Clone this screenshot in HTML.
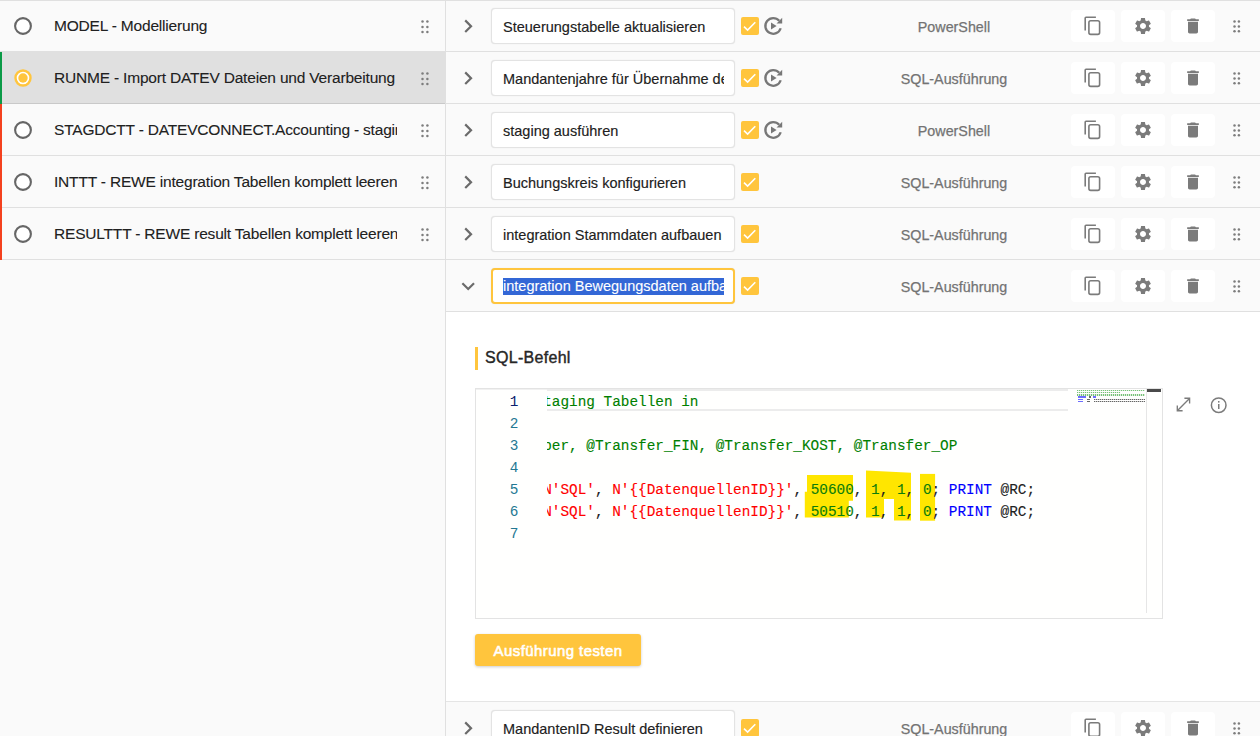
<!DOCTYPE html>
<html><head><meta charset="utf-8">
<style>
*{box-sizing:border-box}
html,body{margin:0;padding:0}
body{width:1260px;height:736px;overflow:hidden;position:relative;background:#fafafa;font-family:"Liberation Sans",sans-serif;color:#212121}
.abs{position:absolute}
/* left panel */
#left{position:absolute;left:0;top:0;width:446px;height:736px;background:#fafafa;border-right:1px solid #e0e0e0}
.lrow{position:absolute;left:0;width:445px;height:52px;border-bottom:1px solid rgba(0,0,0,.1)}
.lrow.sel{background:#e0e0e0}
.bar{position:absolute;left:0;top:0;width:2px;height:52px}
.radio{position:absolute;left:14.3px;top:16.8px;width:18px;height:18px}
.ltxt{position:absolute;left:54px;top:0;width:343px;height:51px;line-height:51px;font-size:15.5px;letter-spacing:-0.19px;-webkit-text-stroke:0.1px #212121;white-space:nowrap;overflow:hidden;color:#212121}
.dh{position:absolute;width:9px;height:15px}
/* right rows */
.rrow{position:absolute;left:446px;width:814px;height:52px;border-bottom:1px solid rgba(0,0,0,.1);background:#fafafa}
.chev{position:absolute;left:8.8px;top:12.8px;width:26.4px;height:26.4px}
.inp{position:absolute;left:45px;top:8px;width:244px;height:36px;background:#fff;border:1px solid #e3e3e3;border-radius:4px;overflow:hidden;box-shadow:0 0 1px rgba(0,0,0,.14)}
.inp span{position:absolute;left:11px;top:0.5px;width:221px;height:34px;line-height:35px;font-size:14.5px;white-space:nowrap;overflow:hidden;color:#212121;-webkit-text-stroke:0.15px #212121}
.inp.focus{border:2px solid #ffc53d}
.inp.focus span{left:10px;top:-1px}
.cb{position:absolute;left:295px;top:17px;width:18px;height:18px;background:#ffc53d;border-radius:2px}
.rep{position:absolute;left:314px;top:13px;width:26px;height:26px}
.type{position:absolute;left:408px;width:200px;top:0.8px;height:52px;line-height:52px;text-align:center;font-size:14.3px;color:#737373;-webkit-text-stroke:0.25px #737373}
.btn{position:absolute;top:10px;width:44px;height:32px;background:#fff;border-radius:4px}
.btn svg{position:absolute;left:12px;top:6px}
.btn.tr svg{left:12.4px}
.mono{font-family:"Liberation Mono",monospace;font-size:14.38px;line-height:22px;-webkit-text-stroke-width:0.12px}
.cm{color:#008000}.st{color:#ff0000}.nu{color:#0b7d0b}.kw{color:#0000ff}
.code>div{white-space:pre;height:22px}
.selx{font-weight:normal;background:#3367d6;color:#fff;padding:0.3px 0 1.2px;-webkit-text-stroke:0.1px #fff}
</style></head>
<body>
<div id="left">
  
  <div class="lrow" style="top:0"><svg class="radio" width="18" height="18" viewBox="0 0 18 18"><circle cx="9" cy="9" r="7.9" fill="#fff" stroke="#666" stroke-width="2.1"/></svg><div class="ltxt">MODEL - Modellierung</div>
    <div class="dh" style="left:420.8px;top:19.6px"><svg width="9" height="15" viewBox="0 0 9 15" style="position:absolute;left:0;top:0"><g fill="#7d7d7d"><circle cx="1.5" cy="1.5" r="1.25"/><circle cx="6.4" cy="1.5" r="1.25"/><circle cx="1.5" cy="6.9" r="1.25"/><circle cx="6.4" cy="6.9" r="1.25"/><circle cx="1.5" cy="12.0" r="1.25"/><circle cx="6.4" cy="12.0" r="1.25"/></g></svg></div></div>
  <div class="lrow sel" style="top:52px"><div class="bar" style="background:#0b9a47"></div><svg class="radio" width="18" height="18" viewBox="0 0 18 18"><circle cx="9" cy="9" r="7.5" fill="#fff" stroke="#ffc53d" stroke-width="2.4"/><circle cx="9" cy="9" r="4.7" fill="#ffc53d"/></svg><div class="ltxt">RUNME - Import DATEV Dateien und Verarbeitung</div>
    <div class="dh" style="left:420.8px;top:19.6px"><svg width="9" height="15" viewBox="0 0 9 15" style="position:absolute;left:0;top:0"><g fill="#7d7d7d"><circle cx="1.5" cy="1.5" r="1.25"/><circle cx="6.4" cy="1.5" r="1.25"/><circle cx="1.5" cy="6.9" r="1.25"/><circle cx="6.4" cy="6.9" r="1.25"/><circle cx="1.5" cy="12.0" r="1.25"/><circle cx="6.4" cy="12.0" r="1.25"/></g></svg></div></div>
  <div class="lrow" style="top:104px"><div class="bar" style="background:#f4411e"></div><svg class="radio" width="18" height="18" viewBox="0 0 18 18"><circle cx="9" cy="9" r="7.9" fill="#fff" stroke="#666" stroke-width="2.1"/></svg><div class="ltxt">STAGDCTT - DATEVCONNECT.Accounting - staging</div>
    <div class="dh" style="left:420.8px;top:19.6px"><svg width="9" height="15" viewBox="0 0 9 15" style="position:absolute;left:0;top:0"><g fill="#7d7d7d"><circle cx="1.5" cy="1.5" r="1.25"/><circle cx="6.4" cy="1.5" r="1.25"/><circle cx="1.5" cy="6.9" r="1.25"/><circle cx="6.4" cy="6.9" r="1.25"/><circle cx="1.5" cy="12.0" r="1.25"/><circle cx="6.4" cy="12.0" r="1.25"/></g></svg></div></div>
  <div class="lrow" style="top:156px"><div class="bar" style="background:#f4411e"></div><svg class="radio" width="18" height="18" viewBox="0 0 18 18"><circle cx="9" cy="9" r="7.9" fill="#fff" stroke="#666" stroke-width="2.1"/></svg><div class="ltxt">INTTT - REWE integration Tabellen komplett leeren</div>
    <div class="dh" style="left:420.8px;top:19.6px"><svg width="9" height="15" viewBox="0 0 9 15" style="position:absolute;left:0;top:0"><g fill="#7d7d7d"><circle cx="1.5" cy="1.5" r="1.25"/><circle cx="6.4" cy="1.5" r="1.25"/><circle cx="1.5" cy="6.9" r="1.25"/><circle cx="6.4" cy="6.9" r="1.25"/><circle cx="1.5" cy="12.0" r="1.25"/><circle cx="6.4" cy="12.0" r="1.25"/></g></svg></div></div>
  <div class="lrow" style="top:208px"><div class="bar" style="background:#f4411e"></div><svg class="radio" width="18" height="18" viewBox="0 0 18 18"><circle cx="9" cy="9" r="7.9" fill="#fff" stroke="#666" stroke-width="2.1"/></svg><div class="ltxt">RESULTTT - REWE result Tabellen komplett leeren</div>
    <div class="dh" style="left:420.8px;top:19.6px"><svg width="9" height="15" viewBox="0 0 9 15" style="position:absolute;left:0;top:0"><g fill="#7d7d7d"><circle cx="1.5" cy="1.5" r="1.25"/><circle cx="6.4" cy="1.5" r="1.25"/><circle cx="1.5" cy="6.9" r="1.25"/><circle cx="6.4" cy="6.9" r="1.25"/><circle cx="1.5" cy="12.0" r="1.25"/><circle cx="6.4" cy="12.0" r="1.25"/></g></svg></div></div>
</div>

<!-- RIGHT ROWS -->
<div class="rrow" style="top:0px"><svg class="chev" viewBox="0 0 24 24"><path fill="#6b6b6b" d="M10 6L8.59 7.41 13.17 12l-4.58 4.59L10 18l6-6z"/></svg><div class="inp"><span>Steuerungstabelle aktualisieren</span></div><div class="cb"><svg width="18" height="18" viewBox="0 0 18 18" style="position:absolute;left:0;top:0"><polyline points="3,9.6 6.6,13.1 14.3,5.2" fill="none" stroke="#fff" stroke-width="1.6"/></svg></div><svg class="rep" viewBox="0 0 26 26"><path d="M20.69 15.26A7.85 7.85 0 1 1 19.21 7.85" fill="none" stroke="#777" stroke-width="2.3"/><polygon points="16.6,10.6 22.2,10.6 22.2,4.8" fill="#777"/><polygon points="11,9.5 11,16.6 16.6,13" fill="#777"/></svg><div class="type">PowerShell</div><div class="btn" style="left:625px"><svg width="44" height="32" viewBox="0 0 44 32" style="position:absolute;left:0;top:0"><path d="M14.2 20.4V8.1Q14.2 7.3 15 7.3H24.9" fill="none" stroke="#7b7b7b" stroke-width="1.6"/><rect x="17.9" y="10.8" width="10.7" height="13.6" rx="1.8" fill="none" stroke="#7b7b7b" stroke-width="1.6"/></svg></div><div class="btn" style="left:675px"><svg width="20" height="20" viewBox="0 0 24 24"><path fill="#7b7b7b" d="M19.14,12.94c0.04-0.3,0.06-0.61,0.06-0.94c0-0.32-0.02-0.64-0.07-0.94l2.03-1.58c0.18-0.14,0.23-0.41,0.12-0.61 l-1.92-3.32c-0.12-0.22-0.37-0.29-0.59-0.22l-2.39,0.96c-0.5-0.38-1.03-0.7-1.62-0.94L14.4,2.81c-0.04-0.24-0.24-0.41-0.48-0.41 h-3.84c-0.24,0-0.43,0.17-0.47,0.41L9.25,5.35C8.66,5.59,8.12,5.92,7.63,6.29L5.240,5.33c-0.22-0.08-0.47,0-0.59,0.22L2.74,8.87 C2.62,9.08,2.66,9.34,2.86,9.48l2.03,1.58C4.84,11.36,4.8,11.69,4.8,12s0.02,0.64,0.07,0.94l-2.03,1.58 c-0.18,0.14-0.23,0.41-0.12,0.61l1.92,3.32c0.12,0.22,0.37,0.29,0.59,0.22l2.39-0.96c0.5,0.38,1.03,0.7,1.62,0.94l0.36,2.54 c0.05,0.24,0.24,0.41,0.48,0.41h3.840c0.24,0,0.44-0.17,0.47-0.41l0.36-2.54c0.59-0.24,1.13-0.56,1.62-0.94l2.39,0.96 c0.22,0.08,0.47,0,0.59-0.22l1.92-3.32c0.12-0.22,0.07-0.47-0.12-0.61L19.14,12.94z M12,15.6c-1.98,0-3.6-1.62-3.6-3.6 s1.62-3.6,3.6-3.6s3.6,1.62,3.6,3.6S13.98,15.6,12,15.6z"/></svg></div><div class="btn tr" style="left:725px"><svg width="20" height="20" viewBox="0 0 24 24"><path fill="#7b7b7b" d="M6 19c0 1.1.9 2 2 2h8c1.1 0 2-.9 2-2V7H6v12zM19 4h-3.5l-1-1h-5l-1 1H5v2h14V4z"/></svg></div><div class="dh" style="left:787.2px;top:19.8px"><svg width="9" height="15" viewBox="0 0 9 15" style="position:absolute;left:0;top:0"><g fill="#7d7d7d"><circle cx="1.5" cy="1.5" r="1.25"/><circle cx="5.9" cy="1.5" r="1.25"/><circle cx="1.5" cy="6.5" r="1.25"/><circle cx="5.9" cy="6.5" r="1.25"/><circle cx="1.5" cy="11.3" r="1.25"/><circle cx="5.9" cy="11.3" r="1.25"/></g></svg></div></div>
<div class="rrow" style="top:52px"><svg class="chev" viewBox="0 0 24 24"><path fill="#6b6b6b" d="M10 6L8.59 7.41 13.17 12l-4.58 4.59L10 18l6-6z"/></svg><div class="inp"><span>Mandantenjahre für Übernahme der Daten</span></div><div class="cb"><svg width="18" height="18" viewBox="0 0 18 18" style="position:absolute;left:0;top:0"><polyline points="3,9.6 6.6,13.1 14.3,5.2" fill="none" stroke="#fff" stroke-width="1.6"/></svg></div><svg class="rep" viewBox="0 0 26 26"><path d="M20.69 15.26A7.85 7.85 0 1 1 19.21 7.85" fill="none" stroke="#777" stroke-width="2.3"/><polygon points="16.6,10.6 22.2,10.6 22.2,4.8" fill="#777"/><polygon points="11,9.5 11,16.6 16.6,13" fill="#777"/></svg><div class="type">SQL-Ausführung</div><div class="btn" style="left:625px"><svg width="44" height="32" viewBox="0 0 44 32" style="position:absolute;left:0;top:0"><path d="M14.2 20.4V8.1Q14.2 7.3 15 7.3H24.9" fill="none" stroke="#7b7b7b" stroke-width="1.6"/><rect x="17.9" y="10.8" width="10.7" height="13.6" rx="1.8" fill="none" stroke="#7b7b7b" stroke-width="1.6"/></svg></div><div class="btn" style="left:675px"><svg width="20" height="20" viewBox="0 0 24 24"><path fill="#7b7b7b" d="M19.14,12.94c0.04-0.3,0.06-0.61,0.06-0.94c0-0.32-0.02-0.64-0.07-0.94l2.03-1.58c0.18-0.14,0.23-0.41,0.12-0.61 l-1.92-3.32c-0.12-0.22-0.37-0.29-0.59-0.22l-2.39,0.96c-0.5-0.38-1.03-0.7-1.62-0.94L14.4,2.81c-0.04-0.24-0.24-0.41-0.48-0.41 h-3.84c-0.24,0-0.43,0.17-0.47,0.41L9.25,5.35C8.66,5.59,8.12,5.92,7.63,6.29L5.240,5.33c-0.22-0.08-0.47,0-0.59,0.22L2.74,8.87 C2.62,9.08,2.66,9.34,2.86,9.48l2.03,1.58C4.84,11.36,4.8,11.69,4.8,12s0.02,0.64,0.07,0.94l-2.03,1.58 c-0.18,0.14-0.23,0.41-0.12,0.61l1.92,3.32c0.12,0.22,0.37,0.29,0.59,0.22l2.39-0.96c0.5,0.38,1.03,0.7,1.62,0.94l0.36,2.54 c0.05,0.24,0.24,0.41,0.48,0.41h3.840c0.24,0,0.44-0.17,0.47-0.41l0.36-2.54c0.59-0.24,1.13-0.56,1.62-0.94l2.39,0.96 c0.22,0.08,0.47,0,0.59-0.22l1.92-3.32c0.12-0.22,0.07-0.47-0.12-0.61L19.14,12.94z M12,15.6c-1.98,0-3.6-1.62-3.6-3.6 s1.62-3.6,3.6-3.6s3.6,1.62,3.6,3.6S13.98,15.6,12,15.6z"/></svg></div><div class="btn tr" style="left:725px"><svg width="20" height="20" viewBox="0 0 24 24"><path fill="#7b7b7b" d="M6 19c0 1.1.9 2 2 2h8c1.1 0 2-.9 2-2V7H6v12zM19 4h-3.5l-1-1h-5l-1 1H5v2h14V4z"/></svg></div><div class="dh" style="left:787.2px;top:19.8px"><svg width="9" height="15" viewBox="0 0 9 15" style="position:absolute;left:0;top:0"><g fill="#7d7d7d"><circle cx="1.5" cy="1.5" r="1.25"/><circle cx="5.9" cy="1.5" r="1.25"/><circle cx="1.5" cy="6.5" r="1.25"/><circle cx="5.9" cy="6.5" r="1.25"/><circle cx="1.5" cy="11.3" r="1.25"/><circle cx="5.9" cy="11.3" r="1.25"/></g></svg></div></div>
<div class="rrow" style="top:104px"><svg class="chev" viewBox="0 0 24 24"><path fill="#6b6b6b" d="M10 6L8.59 7.41 13.17 12l-4.58 4.59L10 18l6-6z"/></svg><div class="inp"><span>staging ausführen</span></div><div class="cb"><svg width="18" height="18" viewBox="0 0 18 18" style="position:absolute;left:0;top:0"><polyline points="3,9.6 6.6,13.1 14.3,5.2" fill="none" stroke="#fff" stroke-width="1.6"/></svg></div><svg class="rep" viewBox="0 0 26 26"><path d="M20.69 15.26A7.85 7.85 0 1 1 19.21 7.85" fill="none" stroke="#777" stroke-width="2.3"/><polygon points="16.6,10.6 22.2,10.6 22.2,4.8" fill="#777"/><polygon points="11,9.5 11,16.6 16.6,13" fill="#777"/></svg><div class="type">PowerShell</div><div class="btn" style="left:625px"><svg width="44" height="32" viewBox="0 0 44 32" style="position:absolute;left:0;top:0"><path d="M14.2 20.4V8.1Q14.2 7.3 15 7.3H24.9" fill="none" stroke="#7b7b7b" stroke-width="1.6"/><rect x="17.9" y="10.8" width="10.7" height="13.6" rx="1.8" fill="none" stroke="#7b7b7b" stroke-width="1.6"/></svg></div><div class="btn" style="left:675px"><svg width="20" height="20" viewBox="0 0 24 24"><path fill="#7b7b7b" d="M19.14,12.94c0.04-0.3,0.06-0.61,0.06-0.94c0-0.32-0.02-0.64-0.07-0.94l2.03-1.58c0.18-0.14,0.23-0.41,0.12-0.61 l-1.92-3.32c-0.12-0.22-0.37-0.29-0.59-0.22l-2.39,0.96c-0.5-0.38-1.03-0.7-1.62-0.94L14.4,2.81c-0.04-0.24-0.24-0.41-0.48-0.41 h-3.84c-0.24,0-0.43,0.17-0.47,0.41L9.25,5.35C8.66,5.59,8.12,5.92,7.63,6.29L5.240,5.33c-0.22-0.08-0.47,0-0.59,0.22L2.74,8.87 C2.62,9.08,2.66,9.34,2.86,9.48l2.03,1.58C4.84,11.36,4.8,11.69,4.8,12s0.02,0.64,0.07,0.94l-2.03,1.58 c-0.18,0.14-0.23,0.41-0.12,0.61l1.92,3.32c0.12,0.22,0.37,0.29,0.59,0.22l2.39-0.96c0.5,0.38,1.03,0.7,1.62,0.94l0.36,2.54 c0.05,0.24,0.24,0.41,0.48,0.41h3.840c0.24,0,0.44-0.17,0.47-0.41l0.36-2.54c0.59-0.24,1.13-0.56,1.62-0.94l2.39,0.96 c0.22,0.08,0.47,0,0.59-0.22l1.92-3.32c0.12-0.22,0.07-0.47-0.12-0.61L19.14,12.94z M12,15.6c-1.98,0-3.6-1.62-3.6-3.6 s1.62-3.6,3.6-3.6s3.6,1.62,3.6,3.6S13.98,15.6,12,15.6z"/></svg></div><div class="btn tr" style="left:725px"><svg width="20" height="20" viewBox="0 0 24 24"><path fill="#7b7b7b" d="M6 19c0 1.1.9 2 2 2h8c1.1 0 2-.9 2-2V7H6v12zM19 4h-3.5l-1-1h-5l-1 1H5v2h14V4z"/></svg></div><div class="dh" style="left:787.2px;top:19.8px"><svg width="9" height="15" viewBox="0 0 9 15" style="position:absolute;left:0;top:0"><g fill="#7d7d7d"><circle cx="1.5" cy="1.5" r="1.25"/><circle cx="5.9" cy="1.5" r="1.25"/><circle cx="1.5" cy="6.5" r="1.25"/><circle cx="5.9" cy="6.5" r="1.25"/><circle cx="1.5" cy="11.3" r="1.25"/><circle cx="5.9" cy="11.3" r="1.25"/></g></svg></div></div>
<div class="rrow" style="top:156px"><svg class="chev" viewBox="0 0 24 24"><path fill="#6b6b6b" d="M10 6L8.59 7.41 13.17 12l-4.58 4.59L10 18l6-6z"/></svg><div class="inp"><span>Buchungskreis konfigurieren</span></div><div class="cb"><svg width="18" height="18" viewBox="0 0 18 18" style="position:absolute;left:0;top:0"><polyline points="3,9.6 6.6,13.1 14.3,5.2" fill="none" stroke="#fff" stroke-width="1.6"/></svg></div><div class="type">SQL-Ausführung</div><div class="btn" style="left:625px"><svg width="44" height="32" viewBox="0 0 44 32" style="position:absolute;left:0;top:0"><path d="M14.2 20.4V8.1Q14.2 7.3 15 7.3H24.9" fill="none" stroke="#7b7b7b" stroke-width="1.6"/><rect x="17.9" y="10.8" width="10.7" height="13.6" rx="1.8" fill="none" stroke="#7b7b7b" stroke-width="1.6"/></svg></div><div class="btn" style="left:675px"><svg width="20" height="20" viewBox="0 0 24 24"><path fill="#7b7b7b" d="M19.14,12.94c0.04-0.3,0.06-0.61,0.06-0.94c0-0.32-0.02-0.64-0.07-0.94l2.03-1.58c0.18-0.14,0.23-0.41,0.12-0.61 l-1.92-3.32c-0.12-0.22-0.37-0.29-0.59-0.22l-2.39,0.96c-0.5-0.38-1.03-0.7-1.62-0.94L14.4,2.81c-0.04-0.24-0.24-0.41-0.48-0.41 h-3.84c-0.24,0-0.43,0.17-0.47,0.41L9.25,5.35C8.66,5.59,8.12,5.92,7.63,6.29L5.240,5.33c-0.22-0.08-0.47,0-0.59,0.22L2.74,8.87 C2.62,9.08,2.66,9.34,2.86,9.48l2.03,1.58C4.84,11.36,4.8,11.69,4.8,12s0.02,0.64,0.07,0.94l-2.03,1.58 c-0.18,0.14-0.23,0.41-0.12,0.61l1.92,3.32c0.12,0.22,0.37,0.29,0.59,0.22l2.39-0.96c0.5,0.38,1.03,0.7,1.62,0.94l0.36,2.54 c0.05,0.24,0.24,0.41,0.48,0.41h3.840c0.24,0,0.44-0.17,0.47-0.41l0.36-2.54c0.59-0.24,1.13-0.56,1.62-0.94l2.39,0.96 c0.22,0.08,0.47,0,0.59-0.22l1.92-3.32c0.12-0.22,0.07-0.47-0.12-0.61L19.14,12.94z M12,15.6c-1.98,0-3.6-1.62-3.6-3.6 s1.62-3.6,3.6-3.6s3.6,1.62,3.6,3.6S13.98,15.6,12,15.6z"/></svg></div><div class="btn tr" style="left:725px"><svg width="20" height="20" viewBox="0 0 24 24"><path fill="#7b7b7b" d="M6 19c0 1.1.9 2 2 2h8c1.1 0 2-.9 2-2V7H6v12zM19 4h-3.5l-1-1h-5l-1 1H5v2h14V4z"/></svg></div><div class="dh" style="left:787.2px;top:19.8px"><svg width="9" height="15" viewBox="0 0 9 15" style="position:absolute;left:0;top:0"><g fill="#7d7d7d"><circle cx="1.5" cy="1.5" r="1.25"/><circle cx="5.9" cy="1.5" r="1.25"/><circle cx="1.5" cy="6.5" r="1.25"/><circle cx="5.9" cy="6.5" r="1.25"/><circle cx="1.5" cy="11.3" r="1.25"/><circle cx="5.9" cy="11.3" r="1.25"/></g></svg></div></div>
<div class="rrow" style="top:208px"><svg class="chev" viewBox="0 0 24 24"><path fill="#6b6b6b" d="M10 6L8.59 7.41 13.17 12l-4.58 4.59L10 18l6-6z"/></svg><div class="inp"><span>integration Stammdaten aufbauen</span></div><div class="cb"><svg width="18" height="18" viewBox="0 0 18 18" style="position:absolute;left:0;top:0"><polyline points="3,9.6 6.6,13.1 14.3,5.2" fill="none" stroke="#fff" stroke-width="1.6"/></svg></div><div class="type">SQL-Ausführung</div><div class="btn" style="left:625px"><svg width="44" height="32" viewBox="0 0 44 32" style="position:absolute;left:0;top:0"><path d="M14.2 20.4V8.1Q14.2 7.3 15 7.3H24.9" fill="none" stroke="#7b7b7b" stroke-width="1.6"/><rect x="17.9" y="10.8" width="10.7" height="13.6" rx="1.8" fill="none" stroke="#7b7b7b" stroke-width="1.6"/></svg></div><div class="btn" style="left:675px"><svg width="20" height="20" viewBox="0 0 24 24"><path fill="#7b7b7b" d="M19.14,12.94c0.04-0.3,0.06-0.61,0.06-0.94c0-0.32-0.02-0.64-0.07-0.94l2.03-1.58c0.18-0.14,0.23-0.41,0.12-0.61 l-1.92-3.32c-0.12-0.22-0.37-0.29-0.59-0.22l-2.39,0.96c-0.5-0.38-1.03-0.7-1.62-0.94L14.4,2.81c-0.04-0.24-0.24-0.41-0.48-0.41 h-3.84c-0.24,0-0.43,0.17-0.47,0.41L9.25,5.35C8.66,5.59,8.12,5.92,7.63,6.29L5.240,5.33c-0.22-0.08-0.47,0-0.59,0.22L2.74,8.87 C2.62,9.08,2.66,9.34,2.86,9.48l2.03,1.58C4.84,11.36,4.8,11.69,4.8,12s0.02,0.64,0.07,0.94l-2.03,1.58 c-0.18,0.14-0.23,0.41-0.12,0.61l1.92,3.32c0.12,0.22,0.37,0.29,0.59,0.22l2.39-0.96c0.5,0.38,1.03,0.7,1.62,0.94l0.36,2.54 c0.05,0.24,0.24,0.41,0.48,0.41h3.840c0.24,0,0.44-0.17,0.47-0.41l0.36-2.54c0.59-0.24,1.13-0.56,1.62-0.94l2.39,0.96 c0.22,0.08,0.47,0,0.59-0.22l1.92-3.32c0.12-0.22,0.07-0.47-0.12-0.61L19.14,12.94z M12,15.6c-1.98,0-3.6-1.62-3.6-3.6 s1.62-3.6,3.6-3.6s3.6,1.62,3.6,3.6S13.98,15.6,12,15.6z"/></svg></div><div class="btn tr" style="left:725px"><svg width="20" height="20" viewBox="0 0 24 24"><path fill="#7b7b7b" d="M6 19c0 1.1.9 2 2 2h8c1.1 0 2-.9 2-2V7H6v12zM19 4h-3.5l-1-1h-5l-1 1H5v2h14V4z"/></svg></div><div class="dh" style="left:787.2px;top:19.8px"><svg width="9" height="15" viewBox="0 0 9 15" style="position:absolute;left:0;top:0"><g fill="#7d7d7d"><circle cx="1.5" cy="1.5" r="1.25"/><circle cx="5.9" cy="1.5" r="1.25"/><circle cx="1.5" cy="6.5" r="1.25"/><circle cx="5.9" cy="6.5" r="1.25"/><circle cx="1.5" cy="11.3" r="1.25"/><circle cx="5.9" cy="11.3" r="1.25"/></g></svg></div></div>
<div class="rrow" style="top:260px"><svg class="chev" viewBox="0 0 24 24"><path fill="#6b6b6b" d="M16.59 8.59L12 13.17 7.41 8.59 6 10l6 6 6-6z"/></svg><div class="inp focus"><span><b class="selx">integration Bewegungsdaten aufbauen</b></span></div><div class="cb"><svg width="18" height="18" viewBox="0 0 18 18" style="position:absolute;left:0;top:0"><polyline points="3,9.6 6.6,13.1 14.3,5.2" fill="none" stroke="#fff" stroke-width="1.6"/></svg></div><div class="type">SQL-Ausführung</div><div class="btn" style="left:625px"><svg width="44" height="32" viewBox="0 0 44 32" style="position:absolute;left:0;top:0"><path d="M14.2 20.4V8.1Q14.2 7.3 15 7.3H24.9" fill="none" stroke="#7b7b7b" stroke-width="1.6"/><rect x="17.9" y="10.8" width="10.7" height="13.6" rx="1.8" fill="none" stroke="#7b7b7b" stroke-width="1.6"/></svg></div><div class="btn" style="left:675px"><svg width="20" height="20" viewBox="0 0 24 24"><path fill="#7b7b7b" d="M19.14,12.94c0.04-0.3,0.06-0.61,0.06-0.94c0-0.32-0.02-0.64-0.07-0.94l2.03-1.58c0.18-0.14,0.23-0.41,0.12-0.61 l-1.92-3.32c-0.12-0.22-0.37-0.29-0.59-0.22l-2.39,0.96c-0.5-0.38-1.03-0.7-1.62-0.94L14.4,2.81c-0.04-0.24-0.24-0.41-0.48-0.41 h-3.84c-0.24,0-0.43,0.17-0.47,0.41L9.25,5.35C8.66,5.59,8.12,5.92,7.63,6.29L5.240,5.33c-0.22-0.08-0.47,0-0.59,0.22L2.74,8.87 C2.62,9.08,2.66,9.34,2.86,9.48l2.03,1.58C4.84,11.36,4.8,11.69,4.8,12s0.02,0.64,0.07,0.94l-2.03,1.58 c-0.18,0.14-0.23,0.41-0.12,0.61l1.92,3.32c0.12,0.22,0.37,0.29,0.59,0.22l2.39-0.96c0.5,0.38,1.03,0.7,1.62,0.94l0.36,2.54 c0.05,0.24,0.24,0.41,0.48,0.41h3.840c0.24,0,0.44-0.17,0.47-0.41l0.36-2.54c0.59-0.24,1.13-0.56,1.62-0.94l2.39,0.96 c0.22,0.08,0.47,0,0.59-0.22l1.92-3.32c0.12-0.22,0.07-0.47-0.12-0.61L19.14,12.94z M12,15.6c-1.98,0-3.6-1.62-3.6-3.6 s1.62-3.6,3.6-3.6s3.6,1.62,3.6,3.6S13.98,15.6,12,15.6z"/></svg></div><div class="btn tr" style="left:725px"><svg width="20" height="20" viewBox="0 0 24 24"><path fill="#7b7b7b" d="M6 19c0 1.1.9 2 2 2h8c1.1 0 2-.9 2-2V7H6v12zM19 4h-3.5l-1-1h-5l-1 1H5v2h14V4z"/></svg></div><div class="dh" style="left:787.2px;top:19.8px"><svg width="9" height="15" viewBox="0 0 9 15" style="position:absolute;left:0;top:0"><g fill="#7d7d7d"><circle cx="1.5" cy="1.5" r="1.25"/><circle cx="5.9" cy="1.5" r="1.25"/><circle cx="1.5" cy="6.5" r="1.25"/><circle cx="5.9" cy="6.5" r="1.25"/><circle cx="1.5" cy="11.3" r="1.25"/><circle cx="5.9" cy="11.3" r="1.25"/></g></svg></div></div>
<div class="rrow" style="top:702px"><svg class="chev" viewBox="0 0 24 24"><path fill="#6b6b6b" d="M10 6L8.59 7.41 13.17 12l-4.58 4.59L10 18l6-6z"/></svg><div class="inp"><span>MandantenID Result definieren</span></div><div class="cb"><svg width="18" height="18" viewBox="0 0 18 18" style="position:absolute;left:0;top:0"><polyline points="3,9.6 6.6,13.1 14.3,5.2" fill="none" stroke="#fff" stroke-width="1.6"/></svg></div><div class="type">SQL-Ausführung</div><div class="btn" style="left:625px"><svg width="44" height="32" viewBox="0 0 44 32" style="position:absolute;left:0;top:0"><path d="M14.2 20.4V8.1Q14.2 7.3 15 7.3H24.9" fill="none" stroke="#7b7b7b" stroke-width="1.6"/><rect x="17.9" y="10.8" width="10.7" height="13.6" rx="1.8" fill="none" stroke="#7b7b7b" stroke-width="1.6"/></svg></div><div class="btn" style="left:675px"><svg width="20" height="20" viewBox="0 0 24 24"><path fill="#7b7b7b" d="M19.14,12.94c0.04-0.3,0.06-0.61,0.06-0.94c0-0.32-0.02-0.64-0.07-0.94l2.03-1.58c0.18-0.14,0.23-0.41,0.12-0.61 l-1.92-3.32c-0.12-0.22-0.37-0.29-0.59-0.22l-2.39,0.96c-0.5-0.38-1.03-0.7-1.62-0.94L14.4,2.81c-0.04-0.24-0.24-0.41-0.48-0.41 h-3.84c-0.24,0-0.43,0.17-0.47,0.41L9.25,5.35C8.66,5.59,8.12,5.92,7.63,6.29L5.240,5.33c-0.22-0.08-0.47,0-0.59,0.22L2.74,8.87 C2.62,9.08,2.66,9.34,2.86,9.48l2.03,1.58C4.84,11.36,4.8,11.69,4.8,12s0.02,0.64,0.07,0.94l-2.03,1.58 c-0.18,0.14-0.23,0.41-0.12,0.61l1.92,3.32c0.12,0.22,0.37,0.29,0.59,0.22l2.39-0.96c0.5,0.38,1.03,0.7,1.62,0.94l0.36,2.54 c0.05,0.24,0.24,0.41,0.48,0.41h3.840c0.24,0,0.44-0.17,0.47-0.41l0.36-2.54c0.59-0.24,1.13-0.56,1.62-0.94l2.39,0.96 c0.22,0.08,0.47,0,0.59-0.22l1.92-3.32c0.12-0.22,0.07-0.47-0.12-0.61L19.14,12.94z M12,15.6c-1.98,0-3.6-1.62-3.6-3.6 s1.62-3.6,3.6-3.6s3.6,1.62,3.6,3.6S13.98,15.6,12,15.6z"/></svg></div><div class="btn tr" style="left:725px"><svg width="20" height="20" viewBox="0 0 24 24"><path fill="#7b7b7b" d="M6 19c0 1.1.9 2 2 2h8c1.1 0 2-.9 2-2V7H6v12zM19 4h-3.5l-1-1h-5l-1 1H5v2h14V4z"/></svg></div><div class="dh" style="left:787.2px;top:19.8px"><svg width="9" height="15" viewBox="0 0 9 15" style="position:absolute;left:0;top:0"><g fill="#7d7d7d"><circle cx="1.5" cy="1.5" r="1.25"/><circle cx="5.9" cy="1.5" r="1.25"/><circle cx="1.5" cy="6.5" r="1.25"/><circle cx="5.9" cy="6.5" r="1.25"/><circle cx="1.5" cy="11.3" r="1.25"/><circle cx="5.9" cy="11.3" r="1.25"/></g></svg></div></div>

<div class="abs" style="left:0;top:0;width:445px;height:1px;background:rgba(0,0,0,.1)"></div>
<div class="abs" style="left:446px;top:0;width:814px;height:1px;background:rgba(0,0,0,.1)"></div>
<!-- DETAIL -->
<div class="abs" style="left:446px;top:312px;width:814px;height:390px;background:#fff;border-bottom:1px solid rgba(0,0,0,.1)"></div>
<div class="abs" style="left:475px;top:347px;width:3px;height:23px;background:#ffc53d"></div>
<div class="abs" style="left:485px;top:349px;height:18px;line-height:18px;font-size:16px;font-weight:normal;-webkit-text-stroke:0.4px #262626;letter-spacing:0.3px;color:#262626;white-space:nowrap">SQL-Befehl</div>
<!-- editor -->
<div class="abs" style="left:475px;top:388px;width:688px;height:231px;border:1px solid #e3e3e3;background:#fffffe"></div>
<div class="abs" style="left:547px;top:389px;width:521px;height:22px;border-top:2px solid #ececec;border-bottom:2px solid #ececec"></div>
<div class="abs" style="left:476px;top:389px;width:71px;height:1px;background:#f1f1f1"></div>

<svg class="abs" style="left:0;top:0" width="1260" height="736" viewBox="0 0 1260 736">
  <path fill="#ffe600" d="M807 475H853V500.7H848.8V517.4H804.8V491.8H807Z"/>
  <path fill="#ffe600" d="M866 470.4L911 472.7V520.4H894V499H884V517.4H866Z"/>
  <path fill="#ffe600" d="M920 473.9H935.1V520.7H920Z"/>
</svg>
<div class="abs mono" id="gutter" style="left:480px;top:391px;width:38.5px;text-align:right;color:#237893;-webkit-text-stroke-width:0">
<div style="color:#0b216f">1</div><div>2</div><div>3</div><div>4</div><div>5</div><div>6</div><div>7</div>
</div>
<div class="abs mono" style="left:547px;top:391px;width:530px;height:160px;overflow:hidden">
<div class="code" style="position:absolute;left:-3.8px;top:0">
<div class="cm">taging Tabellen in</div>
<div> </div>
<div class="cm">ber, @Transfer_FIN, @Transfer_KOST, @Transfer_OP</div>
<div> </div>
<div><span class="st">N'SQL'</span>, <span class="st">N'{{DatenquellenID}}'</span>, <span class="nu">50600</span>, <span class="nu">1</span>, <span class="nu">1</span>, <span class="nu">0</span>; <span class="kw">PRINT</span> @RC;</div>
<div><span class="st">N'SQL'</span>, <span class="st">N'{{DatenquellenID}}'</span>, <span class="nu">50510</span>, <span class="nu">1</span>, <span class="nu">1</span>, <span class="nu">0</span>; <span class="kw">PRINT</span> @RC;</div>
</div></div>

<!-- minimap -->
<div class="abs" style="left:1077px;top:389.6px;width:68px;height:1.5px;background:repeating-linear-gradient(90deg,rgba(30,150,30,.6) 0 1px,rgba(30,150,30,.15) 1px 2px)"></div>
<div class="abs" style="left:1077px;top:391.8px;width:43px;height:1.5px;background:repeating-linear-gradient(90deg,rgba(30,150,30,.6) 0 1px,rgba(30,150,30,.15) 1px 2px)"></div>
<div class="abs" style="left:1077px;top:394px;width:68px;height:1.5px;background:repeating-linear-gradient(90deg,rgba(30,150,30,.6) 0 1px,rgba(30,150,30,.15) 1px 2px)"></div>
<div class="abs" style="left:1078px;top:396.4px;width:8px;height:1.5px;background:rgba(60,60,255,.75)"></div>
<div class="abs" style="left:1088.7px;top:396.4px;width:2px;height:1.5px;background:rgba(0,0,0,.6)"></div>
<div class="abs" style="left:1093px;top:396.4px;width:3.3px;height:1.5px;background:rgba(60,60,255,.75)"></div>
<div class="abs" style="left:1078px;top:398.6px;width:4.6px;height:1.5px;background:rgba(60,60,255,.75)"></div>
<div class="abs" style="left:1087px;top:398.6px;width:2.8px;height:1.5px;background:rgba(0,0,0,.6)"></div>
<div class="abs" style="left:1094.4px;top:398.6px;width:51px;height:1.5px;background:repeating-linear-gradient(90deg,rgba(0,0,0,.6) 0 1px,rgba(0,0,0,.2) 1px 2px)"></div>
<div class="abs" style="left:1078px;top:400.9px;width:4.6px;height:1.6px;background:rgba(60,60,255,.75)"></div>
<div class="abs" style="left:1087px;top:400.9px;width:2.8px;height:1.6px;background:rgba(0,0,0,.6)"></div>
<div class="abs" style="left:1094.4px;top:400.9px;width:51px;height:1.6px;background:repeating-linear-gradient(90deg,rgba(0,0,0,.6) 0 1px,rgba(0,0,0,.2) 1px 2px)"></div>
<div class="abs" style="left:1146px;top:389px;width:1px;height:224px;background:#e6e6e6"></div>
<div class="abs" style="left:1147px;top:389px;width:14px;height:3px;background:#4a4a4a"></div>
<!-- expand / info -->
<svg class="abs" style="left:1170px;top:391px" width="26" height="26" viewBox="0 0 26 26">
  <path d="M7.8 19.2L19 8M14.4 7.2H19.6V12.4M7.3 14.4V19.7H12.6" fill="none" stroke="#7b7b7b" stroke-width="1.35"/>
</svg>
<svg class="abs" style="left:1205px;top:392px" width="26" height="26" viewBox="0 0 26 26">
  <circle cx="13.7" cy="13.2" r="7.3" fill="none" stroke="#7b7b7b" stroke-width="1.5"/>
  <rect x="13" y="12" width="1.5" height="5" fill="#7b7b7b"/><rect x="13" y="9" width="1.5" height="1.6" fill="#7b7b7b"/>
</svg>
<!-- button -->
<div class="abs" style="left:475px;top:634px;width:166px;height:32px;background:#ffc53d;border-radius:3px;box-shadow:0 1px 3px rgba(0,0,0,.2);color:#fff;font-weight:normal;font-size:15px;letter-spacing:0.42px;-webkit-text-stroke:0.55px #fff;line-height:34px;text-align:center;white-space:nowrap">Ausführung testen</div>
</body></html>
